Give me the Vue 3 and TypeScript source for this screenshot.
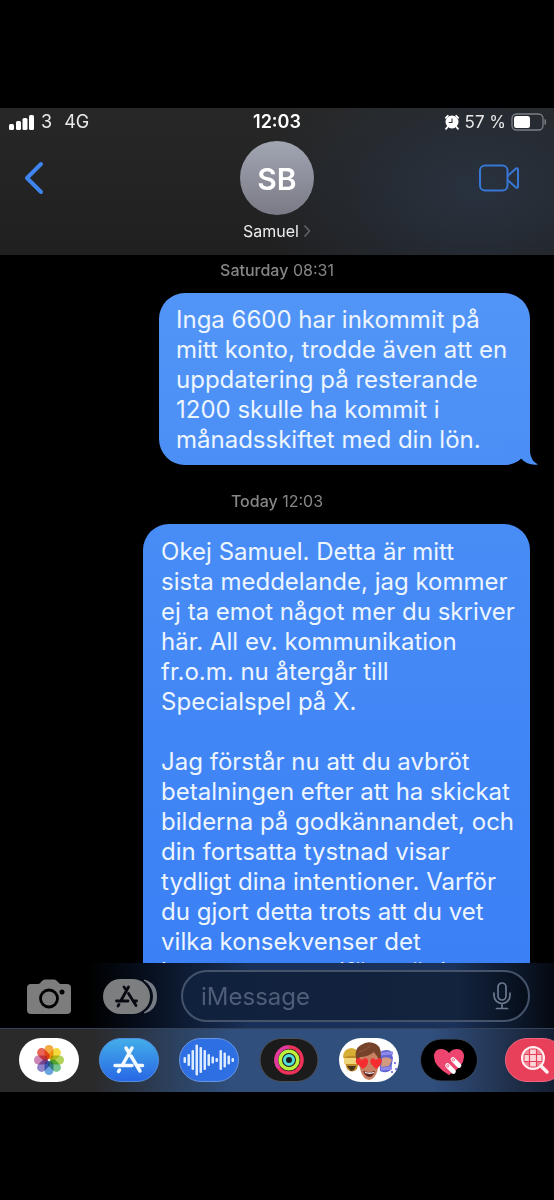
<script setup lang="ts">
import { ref } from 'vue'

interface Message {
  id: number
  day: string
  time: string
  lines: string[]
  size: 'medium' | 'wide'
  tail: boolean
}

const messages: Message[] = [
  {
    id: 1,
    day: 'Saturday',
    time: '08:31',
    size: 'medium',
    tail: true,
    lines: [
      'Inga 6600 har inkommit på',
      'mitt konto, trodde även att en',
      'uppdatering på resterande',
      '1200 skulle ha kommit i',
      'månadsskiftet med din lön.',
    ],
  },
  {
    id: 2,
    day: 'Today',
    time: '12:03',
    size: 'wide',
    tail: false,
    lines: [
      'Okej Samuel. Detta är mitt',
      'sista meddelande, jag kommer',
      'ej ta emot något mer du skriver',
      'här. All ev. kommunikation',
      'fr.o.m. nu återgår till',
      'Specialspel på X.',
      '',
      'Jag förstår nu att du avbröt',
      'betalningen efter att ha skickat',
      'bilderna på godkännandet, och',
      'din fortsatta tystnad visar',
      'tydligt dina intentioner. Varför',
      'du gjort detta trots att du vet',
      'vilka konsekvenser det',
      'kommer att medföra när i',
    ],
  },
]

const draft = ref('')

const petals = ['#f39a1f', '#f2d41c', '#a5cc3a', '#5dbb7d', '#4f93d8', '#7d6fc0', '#c46fa8', '#e8483a']

const waveBars = [6, 12, 20, 31, 26, 20, 12, 7, 4, 20, 15, 9, 4]
</script>

<template>
  <main class="screen">
    <header class="header">
      <div class="status">
        <div class="status-left">
          <svg class="signal" viewBox="0 0 26 17" aria-hidden="true">
            <rect x="0" y="10" width="5" height="6" rx="1.5" />
            <rect x="7" y="7" width="5" height="9" rx="1.5" />
            <rect x="13.500" y="4" width="5" height="12" rx="1.5" />
            <rect x="20" y="1" width="5" height="15" rx="1.5" />
          </svg>
          <span>3</span>
          <span class="network">4G</span>
        </div>
        <time class="clock">12:03</time>
        <div class="status-right">
          <svg class="alarm" viewBox="0 0 16 16" aria-hidden="true">
            <path d="M1.800 3.800 3.800 1.800M14.200 3.800 12.200 1.800M3.500 13 2 14.800M12.500 13 14 14.800" stroke="#fff" stroke-width="1.800" stroke-linecap="round" />
            <circle cx="8" cy="8" r="6.500" fill="#fff" />
            <path d="M8 4.500V8.500H4.800" fill="none" stroke="#2a3038" stroke-width="1.100" />
          </svg>
          <span>57 %</span>
          <svg class="battery" viewBox="0 0 36 18" aria-hidden="true">
            <rect x="1" y="1" width="31" height="16" rx="4.500" fill="none" stroke="#7b7f86" stroke-width="1.300" />
            <rect x="3" y="3" width="16" height="12" rx="2.500" fill="#fff" />
            <path d="M34 6.500q1.500 2.500 0 5z" fill="#7b7f86" stroke="#7b7f86" />
          </svg>
        </div>
      </div>
      <div class="contact-row">
        <button class="icon-button back" type="button" aria-label="Back">
          <svg viewBox="0 0 20 34"><path d="M17 3 3 17 17 31" fill="none" stroke="#3f85ee" stroke-width="4" stroke-linecap="round" stroke-linejoin="round" /></svg>
        </button>
        <button class="contact" type="button">
          <span class="avatar">SB</span>
          <span class="name">Samuel
            <svg viewBox="0 0 8 14" aria-hidden="true"><path d="M1.500 1.500 6.500 7 1.500 12.500" fill="none" stroke="#626468" stroke-width="1.500" /></svg>
          </span>
        </button>
        <button class="icon-button video" type="button" aria-label="Video call">
          <svg viewBox="0 0 40 28">
            <g fill="none" stroke="#3877d5" stroke-width="2" stroke-linejoin="round">
              <rect x="1" y="1.500" width="27.500" height="25" rx="5" />
              <path d="M28.500 12 37 4.500Q39 3.500 39 6V22Q39 24.500 37 23.500L28.500 16" />
            </g>
          </svg>
        </button>
      </div>
    </header>

    <section class="thread" aria-label="Conversation">
      <template v-for="message in messages" :key="message.id">
        <p class="stamp"><b>{{ message.day }}</b> {{ message.time }}</p>
        <div class="bubble" :class="[message.size, { last: !message.tail }]">
          <p class="text">{{ message.lines.join('\n') }}</p>
          <svg v-if="message.tail" class="tail" viewBox="0 0 34 26" aria-hidden="true">
            <path d="M25 0V13Q26 22 33 25.500Q23 27 16 19.500Q9 26 0 26V0Z" fill="#4b8ff6" />
          </svg>
        </div>
      </template>
    </section>

    <form class="composer" @submit.prevent>
      <button class="icon-button camera" type="button" aria-label="Camera">
        <svg viewBox="0 0 44 35">
          <path d="M4 5H11Q13 5 14 3L15 2Q16 .5 18 .5H27Q29 .5 30 2L31 3Q32 5 34 5H40Q44 5 44 9V31Q44 35 40 35H4Q0 35 0 31V9Q0 5 4 5Z" fill="#7d7d7e" />
          <circle cx="22" cy="19.500" r="8.500" fill="none" stroke="#000" stroke-width="2.800" />
          <circle cx="35" cy="13" r="2.500" fill="#000" />
        </svg>
      </button>
      <button class="icon-button apps" type="button" aria-label="Apps">
        <svg viewBox="0 0 54 35">
          <path d="M41 .5Q54 4 54 17.500Q54 31 41 34.500Z" fill="#777c84" />
          <rect x="3" y="-1" width="47" height="37" rx="18.500" fill="#070d18" />
          <rect width="47" height="35" rx="17.500" fill="#7d7e80" />
          <g fill="none" stroke="#070a10" stroke-width="2.800" stroke-linecap="round">
            <path d="M25.500 8 18 21.500M21 8 23.200 11M25.500 14.500 33 26.500M13.500 22H25M30.500 22H33.500M16 25.500 15 27" />
          </g>
        </svg>
      </button>
      <label class="field">
        <input v-model="draft" type="text" placeholder="iMessage" aria-label="iMessage">
        <button class="icon-button mic" type="button" aria-label="Dictate">
          <svg viewBox="0 0 20 28">
            <g fill="none" stroke="#6b7890" stroke-width="1.700" stroke-linecap="round">
              <rect x="6" y="1" width="8" height="17" rx="4" />
              <path d="M2 11V13.500A8 8 0 0 0 18 13.500V11M10 21.500V26.500M4.500 26.500H15.500" />
            </g>
          </svg>
        </button>
      </label>
    </form>

    <nav class="app-bar" aria-label="iMessage apps">
      <button class="app" type="button" aria-label="Photos">
        <svg viewBox="0 0 60 44">
          <rect width="60" height="44" rx="22" fill="#fff" />
          <g>
            <rect v-for="(color, i) in petals" :key="color" class="petal" x="25.500" y="7" width="9" height="14" rx="4.500" :fill="color" :transform="`rotate(${i * 45} 30 22)`" />
          </g>
        </svg>
      </button>
      <button class="app" type="button" aria-label="App Store">
        <svg viewBox="0 0 60 44">
          <defs><linearGradient id="store" x2="0" y2="1"><stop stop-color="#43aee9" /><stop offset="1" stop-color="#2866e5" /></linearGradient></defs>
          <rect x=".5" y=".5" width="59" height="43" rx="21.500" fill="url(#store)" stroke="#4f8fdc" />
          <path d="M33 10 24 26M27 10 29.500 14M32 18 41 33M16 27.500H33M39 27.500H43.500M20.500 32 19.500 33.500" fill="none" stroke="#f3faff" stroke-width="3.500" stroke-linecap="round" />
        </svg>
      </button>
      <button class="app" type="button" aria-label="Audio">
        <svg viewBox="0 0 60 44">
          <rect x=".5" y=".5" width="59" height="43" rx="21.500" fill="#2f6fe4" stroke="#6696e2" />
          <rect v-for="(bar, i) in waveBars" :key="i" :x="4.500 + i * 4" :y="22 - bar / 2" width="2.500" :height="bar" rx="1" fill="#dcecff" />
        </svg>
      </button>
      <button class="app" type="button" aria-label="Activity">
        <svg viewBox="0 0 60 44">
          <rect x="1" y=".5" width="58" height="43" rx="21.500" fill="#1b1b1c" stroke="#4d4f54" />
          <g fill="none" stroke-width="3.600">
            <circle cx="30" cy="22" r="13" stroke="#ed3158" />
            <path d="M30 9A13 13 0 0 0 20 30" stroke="#e03aa0" />
            <circle cx="30" cy="22" r="8.800" stroke="#bdf03c" />
            <circle cx="30" cy="22" r="4.500" stroke="#55dcd9" stroke-width="3" />
          </g>
        </svg>
      </button>
      <button class="app" type="button" aria-label="Memoji">
        <svg viewBox="0 0 60 44">
          <rect width="60" height="44" rx="22" fill="#fff" />
          <path d="M5 22Q4 11 13 11Q21 12 20 23L18 31Q13 36 8 31Z" fill="#bd8b28" />
          <path d="M4 20Q4 10 13 10Q20 11 20 19Q12 16 4 20Z" fill="#d6ae35" />
          <path d="M5 20H20V26H5Z" fill="#eed678" />
          <path d="M8 28H17Q15 33 12 33Z" fill="#49351e" />
          <path d="M40 15Q45 10 52 13L54 20 52 32Q47 36 41 33Z" fill="#6366d2" />
          <path d="M43 20Q50 18 53 22L50 28 42 29Z" fill="#d29b80" />
          <path d="M41 16 54 15M42 31 53 30" stroke="#8f89ec" stroke-width="3" />
          <path d="M55 25h2M56 31h2M52 34h2" stroke="#8d78e4" stroke-width="2" />
          <path d="M19 20Q19 11 30 11Q41 11 41 20L39 31Q36 42 30 42Q24 42 21 31Z" fill="#c88162" />
          <path d="M18 24Q14 11 22 7Q29 2 37 6Q44 10 41 24L38 18Q36 16 35 14Q29 19 21 19Z" fill="#744329" />
          <path d="M20 14Q26 13 31 8" fill="none" stroke="#93583a" />
          <path d="M24 33Q30 35 36 33Q34 39 30 39Q26 38 24 33Z" fill="#5e2220" />
          <path d="M26 34.500Q31 36 35 34.500" fill="none" stroke="#fff" stroke-width="1.300" />
          <path d="M24 31 17 25Q16 20 20 20L23 22Q27 18 29 22Q30 27 24 31ZM37 31 32 26Q30 21 34 20L37 22Q41 18 43 22Q43 27 37 31Z" fill="#f52d31" />
        </svg>
      </button>
      <button class="app" type="button" aria-label="Digital Touch">
        <svg viewBox="0 0 60 44">
          <rect x="1.500" y="1" width="57" height="42" rx="21" fill="#000" stroke="#37475e" />
          <path d="M30 37Q15 28 15 19Q15 11 22 11Q27 11 30 15Q33 11 38 11Q45 11 45 19Q45 28 30 37Z" fill="#ed4470" />
          <path d="M28.500 27.500 34.500 33.500M34 21.500 40 27.500" stroke="#fff" stroke-width="4.600" stroke-linecap="round" />
          <circle cx="28.800" cy="27.800" r="1.200" fill="none" stroke="#ed4470" stroke-width=".8" />
          <circle cx="34.300" cy="21.800" r="1.200" fill="none" stroke="#ed4470" stroke-width=".8" />
        </svg>
      </button>
      <button class="app search" type="button" aria-label="Image search">
        <svg viewBox="0 0 60 44">
          <rect x=".5" y=".5" width="59" height="43" rx="21.500" fill="#e83f5b" stroke="#ee667e" />
          <circle cx="28" cy="20" r="10" fill="#f28494" />
          <path d="M20 17H36V23H20ZM25 12H31V28H25Z" fill="#fbd5d8" />
          <path d="M24.500 11V29M31.500 11V29M19 16.500H37M19 23.500H37" stroke="#e83f5b" stroke-width="1.200" />
          <circle cx="28" cy="20" r="11" fill="none" stroke="#fff1f1" stroke-width="2" />
          <path d="M36 28 42 34" stroke="#fff1f1" stroke-width="3.500" stroke-linecap="round" />
        </svg>
      </button>
    </nav>
  </main>
</template>

<style>
body {
  margin: 0;
  background: #000;
}
</style>

<style scoped>
.screen {
  box-sizing: border-box;
  display: flex;
  flex-direction: column;
  height: 100vh;
  padding: 108px 0;
  overflow: hidden;
  background: #000;
  color: #fff;
  font-family: Inter, "Liberation Sans", sans-serif;
}

button,
input {
  padding: 0;
  border: 0;
  background: none;
  color: inherit;
  font: inherit;
}

button {
  cursor: pointer;
}

svg {
  display: block;
}

p {
  margin: 0;
}

.header {
  flex: none;
  background:
    radial-gradient(ellipse 220px 140px at 86% 55%, #28323f, #28323f00),
    linear-gradient(#272727, #202021);
}

.status {
  display: grid;
  grid-template-columns: 1fr auto 1fr;
  align-items: center;
  height: 28px;
  padding: 0 8px;
  color: #e9e9ea;
  font-size: 18px;
  line-height: 28px;
}

.status-left,
.status-right {
  display: flex;
  align-items: center;
}

.status-right {
  justify-content: flex-end;
  gap: 5px;
  margin-right: -1px;
}

.status-right span {
  font-size: 17px;
}

.signal {
  width: 26px;
  height: 17px;
  margin-right: 6px;
  margin-left: 1px;
  fill: #fff;
}

.network {
  margin-left: 12px;
}

.clock {
  color: #fff;
  font-size: 18px;
  font-weight: 600;
}

.alarm {
  width: 16px;
  height: 16px;
}

.battery {
  width: 36px;
  height: 18px;
}

.contact-row {
  display: grid;
  grid-template-columns: 1fr auto 1fr;
  align-items: start;
  padding: 5px 34px 14px 24px;
}

.contact-row {
  padding-right: 24px;
}

.back {
  width: 20px;
  height: 34px;
  margin-top: 20px;
}

.contact {
  display: flex;
  flex-direction: column;
  align-items: center;
  gap: 6px;
}

.avatar {
  width: 74px;
  height: 74px;
  border-radius: 50%;
  background: linear-gradient(#a2a6b3, #797a85);
  font-size: 30px;
  font-weight: 600;
  line-height: 76px;
}

.name {
  display: flex;
  align-items: center;
  gap: 4px;
  color: #ededee;
  font-size: 16px;
  line-height: 20px;
}

.name svg {
  width: 8px;
  height: 14px;
}

.video {
  justify-self: end;
  width: 40px;
  height: 28px;
  margin-top: 23px;
  margin-right: 11px;
}

.thread {
  display: flex;
  flex: 1;
  flex-direction: column;
  align-items: flex-end;
  min-height: 0;
  padding: 5px 24px 0 0;
  overflow: hidden;
}

.stamp {
  align-self: stretch;
  flex: none;
  padding-left: 24px;
  margin-bottom: 13px;
  color: #87878a;
  font-size: 16px;
  line-height: 20px;
  text-align: center;
}

.stamp b {
  font-weight: 500;
}

.bubble {
  position: relative;
  box-sizing: border-box;
  flex: none;
  padding: 12px 18px 10px 17px;
  margin-bottom: 26px;
  border-radius: 26px;
  background: linear-gradient(#5295f7, #4b8ff6);
}

.bubble.medium {
  width: 70%;
}

.bubble.wide {
  width: 73%;
}

.bubble.last {
  padding: 13px 18px 10px;
  background: linear-gradient(#488cf6, #3a7ff5);
}

.text {
  color: #edf5ff;
  font-size: 24px;
  line-height: 30px;
  white-space: pre;
}

.tail {
  position: absolute;
  right: -9px;
  bottom: 0;
  width: 34px;
  height: 26px;
}

.composer {
  display: flex;
  flex: none;
  align-items: center;
  padding: 7px 24px 6px 27px;
  background: linear-gradient(90deg, #000 16%, #071020 27%, #193058 45%, #1a3159 82%, #040910);
}

.camera {
  flex: none;
  width: 44px;
  height: 35px;
  margin-right: 32px;
}

.apps {
  flex: none;
  width: 54px;
  height: 35px;
  margin-right: 24px;
}

.field {
  box-sizing: border-box;
  display: flex;
  flex: 1;
  align-items: center;
  min-width: 0;
  height: 52px;
  padding: 0 16px 0 18px;
  border: 2px solid #45536b;
  border-radius: 26px;
  background: linear-gradient(90deg, #10213d, #13233e 80%, #050d19);
}

.field input {
  flex: 1;
  min-width: 0;
  outline: 0;
  color: #fff;
  font-size: 24px;
}

.field input::placeholder {
  color: #4f5e78;
  opacity: 1;
}

.mic {
  width: 20px;
  height: 28px;
}

.app-bar {
  display: flex;
  flex: none;
  gap: 20px;
  padding: 9px 0 10px 19px;
  border-top: 1px solid #35425a;
  overflow: hidden;
  background: linear-gradient(90deg, #2a2a2b 17%, #2c4261 32%, #304f7d 42%, #304f7d 78%, #20304b 92%, #131e31);
}

.app {
  flex: none;
  width: 60px;
  height: 44px;
}

.petal {
  opacity: 0.85;
  mix-blend-mode: multiply;
}

.search {
  margin-left: 6px;
}
</style>
